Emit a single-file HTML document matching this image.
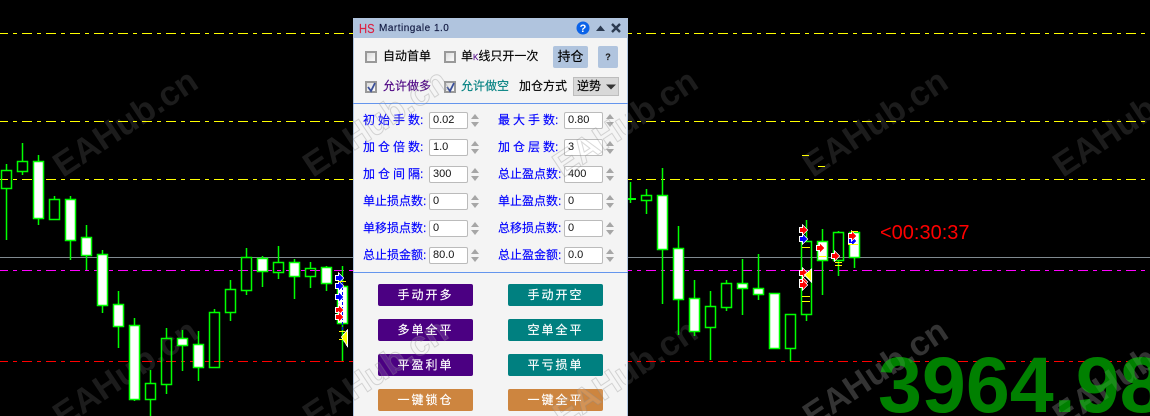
<!DOCTYPE html>
<html><head><meta charset="utf-8"><style>
html,body{margin:0;padding:0;width:1150px;height:416px;overflow:hidden;background:#000}
body{position:relative;font-family:"Liberation Sans","Noto Sans CJK SC",sans-serif}
svg{position:absolute;left:0;top:0}
.a{position:absolute;white-space:nowrap;line-height:16px;font-size:12px;-webkit-text-stroke:.15px currentColor}
#p{position:absolute;left:353px;top:18px;width:273px;height:398px;background:#f4f4f4;border-left:1px solid #b0c4de;border-right:1px solid #b0c4de}
#p .a{margin-left:-354px;margin-top:-18px}
#p .b,#p .i,#p .c{margin-left:-354px;margin-top:-18px}
.c{position:absolute;width:8px;height:8px;border:2px solid #999;background:linear-gradient(135deg,#ddd,#fbfbfb)}
.i{position:absolute;box-sizing:border-box;width:39px;height:17px;border:1px solid #bbb;border-radius:2px;background:#fff;font-size:11px;line-height:15px;padding-left:3px;color:#111}
.b{position:absolute;width:95px;height:22px;border-radius:2px;color:#fff;text-align:center;font-size:12px;line-height:22px;letter-spacing:2px;-webkit-text-stroke:.15px currentColor}
.l{color:#00f}.s{letter-spacing:3px}.s i{font-style:normal;letter-spacing:0;margin-left:-3px}
</style></head><body>
<svg width="1150" height="416" viewBox="0 0 1150 416">
<g font-family="Liberation Sans" font-weight="bold" font-size="34.500" fill="#1c1c1c">
<text transform="translate(63 178) rotate(-33.6)">EAHub.cn</text>
<text transform="translate(313 178) rotate(-33.6)">EAHub.cn</text>
<text transform="translate(563 178) rotate(-33.6)">EAHub.cn</text>
<text transform="translate(813 178) rotate(-33.6)">EAHub.cn</text>
<text transform="translate(1063 178) rotate(-33.6)">EAHub.cn</text>
<text transform="translate(63 428) rotate(-33.6)">EAHub.cn</text>
<text transform="translate(313 428) rotate(-33.6)">EAHub.cn</text>
<text transform="translate(563 428) rotate(-33.6)">EAHub.cn</text>
<text transform="translate(813 428) rotate(-33.6)">EAHub.cn</text>
<text transform="translate(1063 428) rotate(-33.6)">EAHub.cn</text>
</g>
<g fill="none" stroke-width="1">
<g stroke-dasharray="10 5 4 5" stroke-dashoffset="2" shape-rendering="crispEdges">
<path stroke="#ff0" d="M0 33.5H1150M0 121.5H1150M0 179.5H1150"/>
<path stroke="#f0f" d="M0 270.5H1150"/>
<path stroke="#f00" d="M0 361.5H1150"/>
</g>
<path stroke="#808a90" shape-rendering="crispEdges" d="M0 257.5H1150"/>
<g stroke-width="1.5">
<path stroke="#0f0" d="M6.5 164V170M6.500 188V240M22.500 143V161M22.500 171V175M38.500 155V161M38.500 218V225M54.500 196V199M54.500 219V220M70.500 196V199M70.500 240V260M86.500 225V237M86.500 255V270M102.500 250V254M102.500 305V313M118.500 291V304M118.500 326V348M134.500 318V325M134.500 399V401M150.500 370V383M150.500 399V416M166.500 328V338M166.500 384V394M182.500 330V338M182.500 345V371M198.500 331V344M198.500 367V381M214.500 309V312M214.500 367V368M230.500 280V289M230.500 312V321M246.500 248V257M246.500 290V295M262.500 256V258M262.500 271V287M278.500 246V262M278.500 272V279M294.500 259V262M294.500 276V299M310.500 262V268M310.500 276V288M326.500 266V267M326.500 283V291M342.500 266V286M342.500 323V361M630.500 182V203M646.500 189V195M646.500 200V214M662.500 168V195M662.500 249V304M678.500 226V248M678.500 299V335M694.500 280V298M694.500 331V336M710.500 291V306M710.500 327V360M726.500 280V283M726.500 307V311M742.500 259V283M742.500 288V315M758.500 254V288M758.500 294V300M790.500 348V361M806.500 220V241M806.500 314V321M822.500 229V241M822.500 260V295M838.500 231V232M838.500 260V276M854.500 257V268"/>
<path stroke="#0f0" d="M1.500 170.500h10v18h-10zM17.500 161.500h10v10h-10zM49.500 199.500h10v20h-10zM145.500 383.500h10v16h-10zM161.500 338.500h10v46h-10zM209.500 312.500h10v55h-10zM225.500 289.500h10v23h-10zM241.500 257.500h10v33h-10zM273.500 262.500h10v10h-10zM305.500 268.500h10v8h-10zM641.500 195.500h10v5h-10zM705.500 306.500h10v21h-10zM721.500 283.500h10v24h-10zM785.500 314.500h10v34h-10zM801.500 241.500h10v73h-10zM833.500 232.500h10v28h-10z"/>
<path stroke="#0f0" fill="#fff" d="M33.500 161.500h10v57h-10zM65.500 199.500h10v41h-10zM81.500 237.500h10v18h-10zM97.500 254.500h10v51h-10zM113.500 304.500h10v22h-10zM129.500 325.500h10v74h-10zM177.500 338.500h10v7h-10zM193.500 344.500h10v23h-10zM257.500 258.500h10v13h-10zM289.500 262.500h10v14h-10zM321.500 267.500h10v16h-10zM337.500 286.500h10v37h-10zM657.500 195.500h10v54h-10zM673.500 248.500h10v51h-10zM689.500 298.500h10v33h-10zM737.500 283.500h10v5h-10zM753.500 288.500h10v6h-10zM769.500 293.500h10v55h-10zM817.500 241.500h10v19h-10zM849.500 232.500h10v25h-10z"/>
</g>
<path stroke="#0f0" shape-rendering="crispEdges" d="M628 198.500H636M628 199.500H636"/>
<path stroke="#00f" shape-rendering="crispEdges" stroke-dasharray="3 2" d="M342.500 277V331"/>
</g>
<g stroke="#fff" stroke-width="1.600" paint-order="stroke" stroke-linejoin="miter" shape-rendering="crispEdges">
<g fill="#00f">
<path transform="translate(336 278)" d="M0-2H3V-4L7 0 3 4V2H0Z"/>
<path transform="translate(336 286)" d="M0-2H3V-4L7 0 3 4V2H0Z"/>
<path transform="translate(336 297)" d="M0-2H3V-4L7 0 3 4V2H0Z"/>
<path transform="translate(800 239)" d="M0-2H3V-4L7 0 3 4V2H0Z"/>
<path transform="translate(849 241)" d="M0-2H3V-4L7 0 3 4V2H0Z"/>
</g>
<g fill="#f00">
<path transform="translate(336 310)" d="M0-2H3V-4L7 0 3 4V2H0Z"/>
<path transform="translate(336 317)" d="M0-2H3V-4L7 0 3 4V2H0Z"/>
<path transform="translate(800 230)" d="M0-2H3V-4L7 0 3 4V2H0Z"/>
<path transform="translate(800 273)" d="M0-2H3V-4L7 0 3 4V2H0Z"/>
<path transform="translate(800 282)" d="M0-2H3V-4L7 0 3 4V2H0Z"/>
<path transform="translate(800 285)" d="M0-2H3V-4L7 0 3 4V2H0Z"/>
<path transform="translate(817 248)" d="M0-2H3V-4L7 0 3 4V2H0Z"/>
<path transform="translate(832 256)" d="M0-2H3V-4L7 0 3 4V2H0Z"/>
<path transform="translate(849 236)" d="M0-2H3V-4L7 0 3 4V2H0Z"/>
</g>
<path fill="#ff0" d="M347 331V345L342 337Z"/>
<path fill="#ff0" d="M811 270V281L805 275Z"/>
</g>
<path shape-rendering="crispEdges" fill="none" stroke="#ff0" d="M802 155.500H809M818 166.500H825M802 247.500H810M802 296.500H810M802 301.500H810M819 256.500H826M835 262.500H842M835 265.500H842M848 244.500H858M851 231.500H858M338 281.500H346M339 331.500H345M339 339.500H344"/>
<text x="880" y="239" font-family="Liberation Sans" font-size="20" fill="#f00">&lt;00:30:37</text>
<text x="878" y="412" font-family="Liberation Sans" font-weight="bold" font-size="79" fill="#008000">3964.98</text>
<g font-family="Liberation Sans" font-weight="bold" font-size="34.500" fill="#fff" fill-opacity=".1">
<text transform="translate(813 428) rotate(-33.6)">EAHub.cn</text>
<text transform="translate(1063 428) rotate(-33.6)">EAHub.cn</text>
</g>
</svg>
<div id="p">
<div style="position:absolute;left:0;top:0;width:273px;height:20px;background:#b0c4de"></div>
<div class="a" style="left:359px;top:21px;color:#dc1f40;font-size:13px;transform:scaleX(.86);transform-origin:0 50%">HS</div>
<div class="a" style="left:379px;top:21px;color:#101840;font-size:10px;letter-spacing:.5px">Martingale 1.0</div>
<svg style="left:-1px;top:-18px" width="275" height="60" viewBox="353 0 275 60">
<circle cx="583" cy="28" r="6.500" fill="#0a62e8"/>
<text x="583" y="32" text-anchor="middle" font-family="Liberation Sans" font-weight="bold" font-size="11" fill="#fff">?</text>
<path d="M596 31L600.500 25.500 605 31Z" fill="#2b3a50"/>
<path d="M612 24L620 32M620 24L612 32" stroke="#2b3a50" stroke-width="2.400" fill="none"/>
</svg>
<div class="c" style="left:365px;top:51px"></div>
<div class="a" style="left:383px;top:48px">自动首单</div>
<div class="c" style="left:444px;top:51px"></div>
<div class="a" style="left:461px;top:48px">单<span style="font-size:8px;color:#4b0082">K</span>线只开一次</div>
<div class="b" style="left:553px;top:46px;width:35px;height:22px;background:#b0c4de;color:#000;letter-spacing:0;font-size:13px">持仓</div>
<div class="b" style="left:598px;top:46px;width:20px;height:22px;background:#b0c4de;color:#222;letter-spacing:0;font-size:9px;font-weight:bold">?</div>
<div class="c" style="left:365px;top:81px"></div>
<div class="c" style="left:444px;top:81px"></div>
<svg style="left:-1px;top:-18px" width="275" height="280" viewBox="353 0 275 280">
<path d="M368 87L371 91 375 83M447 87L450 91 454 83" stroke="#3a4f9a" stroke-width="1.800" fill="none"/>
<rect x="573.500" y="77.500" width="45" height="18" fill="#d8d8d8" stroke="#bdbdbd"/>
<path d="M606 84.500H616L611 89.500Z" fill="#333"/>
<rect x="353" y="103" width="275" height="1" fill="#6495ed"/>
<rect x="353" y="272" width="275" height="1" fill="#6495ed"/>
</svg>
<div class="a" style="left:383px;top:78px;color:#4b0082">允许做多</div>
<div class="a" style="left:461px;top:78px;color:#008080">允许做空</div>
<div class="a" style="left:519px;top:78px">加仓方式</div>
<div class="a" style="left:577px;top:78px">逆势</div>

<div class="a l s" style="left:363px;top:112px">初始手数<i>:</i></div>
<div class="a l s" style="left:498px;top:112px">最大手数<i>:</i></div>
<div class="a l s" style="left:363px;top:139px">加仓倍数<i>:</i></div>
<div class="a l s" style="left:498px;top:139px">加仓层数<i>:</i></div>
<div class="a l s" style="left:363px;top:166px">加仓间隔<i>:</i></div>
<div class="a l" style="left:498px;top:166px">总止盈点数:</div>
<div class="a l" style="left:363px;top:193px">单止损点数:</div>
<div class="a l" style="left:498px;top:193px">单止盈点数:</div>
<div class="a l" style="left:363px;top:220px">单移损点数:</div>
<div class="a l" style="left:498px;top:220px">总移损点数:</div>
<div class="a l" style="left:363px;top:247px">总止损金额:</div>
<div class="a l" style="left:498px;top:247px">总止盈金额:</div>

<div class="i" style="left:429px;top:112px">0.02</div><div class="i" style="left:564px;top:112px">0.80</div>
<div class="i" style="left:429px;top:139px">1.0</div><div class="i" style="left:564px;top:139px">3</div>
<div class="i" style="left:429px;top:166px">300</div><div class="i" style="left:564px;top:166px">400</div>
<div class="i" style="left:429px;top:193px">0</div><div class="i" style="left:564px;top:193px">0</div>
<div class="i" style="left:429px;top:220px">0</div><div class="i" style="left:564px;top:220px">0</div>
<div class="i" style="left:429px;top:247px">80.0</div><div class="i" style="left:564px;top:247px">0.0</div>
<svg style="left:-1px;top:-18px" width="275" height="290" viewBox="353 0 275 290">
<g fill="#a6a6a6">
<path d="M471 119L475 114 479 119ZM471 122L475 127 479 122ZM471 146L475 141 479 146ZM471 149L475 154 479 149ZM471 173L475 168 479 173ZM471 176L475 181 479 176ZM471 200L475 195 479 200ZM471 203L475 208 479 203ZM471 227L475 222 479 227ZM471 230L475 235 479 230ZM471 254L475 249 479 254ZM471 257L475 262 479 257Z"/>
<path d="M606 119L610 114 614 119ZM606 122L610 127 614 122ZM606 146L610 141 614 146ZM606 149L610 154 614 149ZM606 173L610 168 614 173ZM606 176L610 181 614 176ZM606 200L610 195 614 200ZM606 203L610 208 614 203ZM606 227L610 222 614 227ZM606 230L610 235 614 230ZM606 254L610 249 614 254ZM606 257L610 262 614 257Z"/>
</g>
</svg>
<div class="b" style="left:378px;top:284px;background:#4b0082">手动开多</div>
<div class="b" style="left:508px;top:284px;background:#008080">手动开空</div>
<div class="b" style="left:378px;top:319px;background:#4b0082">多单全平</div>
<div class="b" style="left:508px;top:319px;background:#008080">空单全平</div>
<div class="b" style="left:378px;top:354px;background:#4b0082">平盈利单</div>
<div class="b" style="left:508px;top:354px;background:#008080">平亏损单</div>
<div class="b" style="left:378px;top:389px;background:#cd853f">一键锁仓</div>
<div class="b" style="left:508px;top:389px;background:#cd853f">一键全平</div>
</div>
<svg width="1150" height="416" viewBox="0 0 1150 416" style="clip-path:inset(38px 524px 0 353px)">
<g font-family="Liberation Sans" font-weight="bold" font-size="34.500" fill="#fff" fill-opacity=".12" stroke="#8a8a8a" stroke-opacity=".32" stroke-width="1">
<text transform="translate(313 178) rotate(-33.6)">EAHub.cn</text>
<text transform="translate(563 178) rotate(-33.6)">EAHub.cn</text>
<text transform="translate(313 428) rotate(-33.6)">EAHub.cn</text>
<text transform="translate(563 428) rotate(-33.6)">EAHub.cn</text>
</g>
</svg>
</body></html>
